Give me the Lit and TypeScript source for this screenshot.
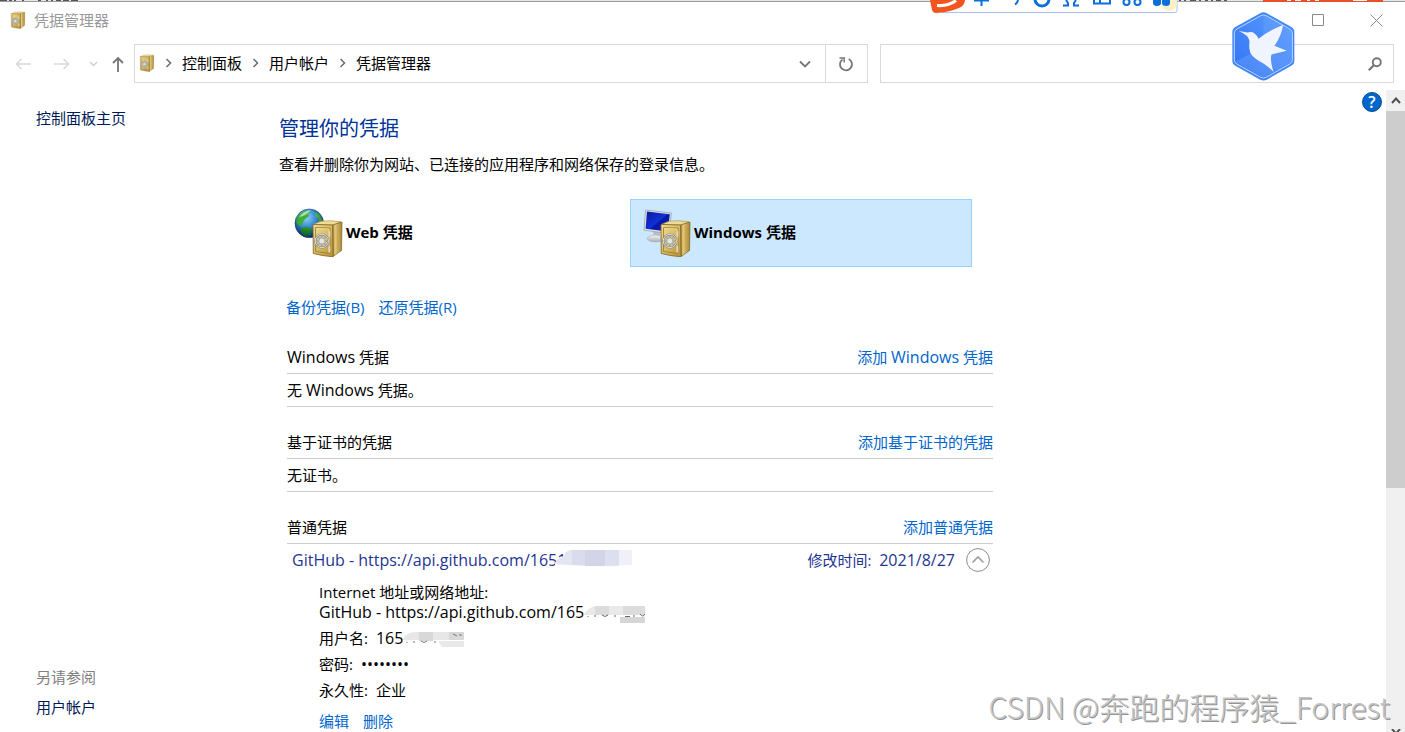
import { LitElement, html, svg, css } from "lit";
import { customElement, state } from "lit/decorators.js";

const safeDefs = svg`
  <defs>
    <linearGradient id="front" x1="0" y1="0" x2="1" y2="1">
      <stop offset="0" stop-color="#f3e09a" />
      <stop offset=".5" stop-color="#d9bb62" />
      <stop offset="1" stop-color="#b58f35" />
    </linearGradient>
    <linearGradient id="side" x1="0" y1="0" x2="1" y2="0">
      <stop offset="0" stop-color="#8f6d22" />
      <stop offset=".25" stop-color="#e5cb7c" />
      <stop offset="1" stop-color="#a98331" />
    </linearGradient>
    <radialGradient id="sea" cx=".4" cy=".3" r=".75">
      <stop offset="0" stop-color="#8fd4f7" />
      <stop offset=".5" stop-color="#2f80d0" />
      <stop offset="1" stop-color="#123a86" />
    </radialGradient>
    <radialGradient id="shade" cx=".45" cy=".35" r=".65">
      <stop offset=".5" stop-color="#04204c" stop-opacity="0" />
      <stop offset="1" stop-color="#04204c" stop-opacity=".65" />
    </radialGradient>
    <linearGradient id="screen" x1="0" y1="0" x2="1" y2="1">
      <stop offset="0" stop-color="#0a1a9c" />
      <stop offset=".5" stop-color="#1030d8" />
      <stop offset=".55" stop-color="#0717a4" />
      <stop offset="1" stop-color="#1224c0" />
    </linearGradient>
    <linearGradient id="stand" x1="0" y1="0" x2="0" y2="1">
      <stop offset="0" stop-color="#f4f4f4" />
      <stop offset="1" stop-color="#a9afb6" />
    </linearGradient>
  </defs>`;

const safeBody = svg`
  <path d="M19 17.5 27 14.2Q37 13 47 14.8L39 18Z" fill="#efdc9c" stroke="#a88637" stroke-width=".6" />
  <path d="M38.5 18 48 15 47.5 43.5 39 49.5Z" fill="url(#side)" stroke="#7d6020" stroke-width=".7" />
  <path d="M19 17.5 38.5 18 39 49.8Q29 49 19.3 46.5Z" fill="url(#front)" stroke="#8b6b26" stroke-width=".9" />
  <path d="M21.5 20.5 36 21V46.5L21.5 44.5Z" fill="none" stroke="#a07e32" stroke-width=".9" />
  <path d="M22.3 21.5 35.2 22V45.6" fill="none" stroke="#f8e9b0" stroke-width=".6" />
  <path d="M44 19v24" stroke="#c7a650" stroke-width="1.4" />
  <circle cx="27.8" cy="34" r="6.6" fill="#cfc28f" stroke="#7c7f80" stroke-width="2" />
  <circle cx="27.8" cy="34" r="6.6" fill="none" stroke="#eef0f0" stroke-width=".9" />
  <path d="M27.8 28v12M21.8 34h12M23.6 29.8l8.4 8.4M32 29.8l-8.4 8.4" stroke="#8c8f90" stroke-width=".7" />
  <circle cx="27.8" cy="34" r="3" fill="#e4e6e6" stroke="#8d9193" stroke-width=".6" />
  <path d="M35.4 25v4M35.4 40v4.5" stroke="#d6d8d8" stroke-width="1.8" stroke-linecap="round" />`;

const smallSafe = html`
  <svg class="small-safe" viewBox="17 12 33 39" aria-hidden="true">${safeDefs}${safeBody}</svg>`;

const webIcon = html`
  <svg class="tile-icon" viewBox="0 0 50 50" aria-hidden="true">
    ${safeDefs}
    <circle cx="15.3" cy="16.3" r="14.3" fill="url(#sea)" stroke="#1b4c8c" stroke-width=".6" />
    <path d="M2.5 11Q6 5 12 3.5L17 4 14 7 15 9 10 13 8 18 5 19 2 16Z" fill="#3fae3a" />
    <path d="M22 5 26 8 29 14 27 20 24 17 25 12 21 9Z" fill="#49b63f" />
    <path d="M6 22 12 19.5 18 22 17 28 12 30Q7 28 6 22Z" fill="#279527" />
    <path d="M5 10Q9 4 17 3 12 9 5 10Z" fill="#d8f2e0" opacity=".7" />
    <circle cx="15.3" cy="16.3" r="14.3" fill="url(#shade)" />
    ${safeBody}
  </svg>`;

const windowsIcon = html`
  <svg class="tile-icon" viewBox="0 0 50 50" aria-hidden="true">
    ${safeDefs}
    <path d="M11 24 18 25V31H12Z" fill="#b9bfc5" />
    <ellipse cx="13.5" cy="31.5" rx="8.2" ry="3.4" fill="url(#stand)" stroke="#9da3a9" stroke-width=".5" />
    <path d="M3.6 3 29.4 6 27 26.5 2 23.2Z" fill="#dfe4ea" stroke="#8f98a3" stroke-width=".7" />
    <path d="M5 4.6 27.8 7.2 25.8 24.6 3.6 21.8Z" fill="url(#screen)" />
    ${safeBody}
  </svg>`;

const chevron = html`
  <svg class="crumb-sep" viewBox="0 0 27 12" aria-hidden="true">
    <path d="M11.5 2 15.5 6 11.5 10" fill="none" stroke="#6b6b6b" stroke-width="1.5" />
  </svg>`;

/* Latin words are set one size larger than the Chinese text around them. */
const mixed = (text: string) =>
  text.split(/([A-Za-z]+)/).map((run, i) => (i % 2 ? html`<span class="latin">${run}</span>` : run));

interface Section {
  title: string;
  action: string;
  empty?: string;
}

const sections: Section[] = [
  { title: "Windows 凭据", action: "添加 Windows 凭据", empty: "无 Windows 凭据。" },
  { title: "基于证书的凭据", action: "添加基于证书的凭据", empty: "无证书。" },
  { title: "普通凭据", action: "添加普通凭据" },
];

@customElement("app-root")
export class AppRoot extends LitElement {
  @state() private expanded = true;

  static styles = css`
    :host {
      display: flex;
      flex-direction: column;
      position: relative;
      height: 100vh;
      overflow: hidden;
      background: #fff;
      color: #000;
      font: 15px/20px "Open Sans", "Noto Sans CJK SC", sans-serif;
    }
    * { box-sizing: border-box; }
    a { color: #0066cc; text-decoration: none; }
    button {
      display: flex;
      align-items: center;
      justify-content: center;
      padding: 0;
      border: 0;
      background: none;
      color: inherit;
      font: inherit;
    }
    svg { display: block; flex: none; }
    h1, h2, p, dl, dd { margin: 0; font: inherit; }
    .latin { font-size: 16px; }

    .strip { flex: none; height: 2px; background: #e6e6e6; border-bottom: 1px solid #9b9b9b; }
    .titlebar { flex: none; display: flex; align-items: center; height: 36px; padding-left: 10px; color: #999; }
    .small-safe { width: 16px; height: 18px; }
    .title { flex: 1; margin-left: 8px; }
    .window-button { width: 58px; height: 36px; }

    .navbar { flex: none; display: flex; height: 39px; margin-top: 6px; padding: 0 11px 0 4px; }
    .history { display: flex; width: 130px; }
    .history button { width: 38px; }
    .history .forward { width: 40px; }
    .history .recent { width: 22px; }
    .history .up { width: 28px; }
    .address { flex: 27; display: flex; align-items: center; border: 1px solid #d9d9d9; padding-left: 4px; }
    .crumbs { flex: 1; display: flex; align-items: center; padding-bottom: 2px; }
    .crumbs a { color: #000; }
    .crumb-sep { width: 27px; height: 12px; }
    .drop { width: 40px; height: 37px; }
    .refresh { width: 42px; height: 37px; border-left: 1px solid #d9d9d9; }
    .search { flex: 19; display: flex; align-items: center; margin-left: 12px; border: 1px solid #d9d9d9; }
    .search input { flex: 1; min-width: 0; height: 30px; border: 0; outline: 0; padding: 0 8px; background: none; font: inherit; }
    .search button { width: 36px; height: 37px; }

    .body { flex: 1; min-height: 0; display: flex; margin-top: 7px; }
    .sidebar { flex: none; display: flex; flex-direction: column; width: 279px; padding: 18px 0 15px 36px; }
    .sidebar a { color: #001a57; }
    .see-also { display: flex; flex-direction: column; gap: 10px; margin-top: auto; color: #808080; }
    main { flex: 1; min-width: 0; padding-top: 25px; overflow: hidden; }
    h1 { color: #003399; font-size: 20px; line-height: 28px; }
    .intro { margin-top: 11px; }
    .tiles { display: grid; grid-template-columns: 1fr 1fr; gap: 6px; max-width: 693px; margin-top: 25px; padding-left: 3px; }
    .tile { justify-content: flex-start; gap: 2px; height: 68px; padding: 0 11px 2px; border: 1px solid transparent; font-weight: 700; }
    .tile.selected { border-color: #99d1ff; background: #cce8ff; }
    .tile-icon { width: 50px; height: 50px; }
    .backup { display: flex; gap: 14px; margin: 30px 0 24px 7px; }

    .sections { display: flex; flex-direction: column; gap: 19px; max-width: 714px; padding-left: 8px; }
    .row { display: flex; align-items: center; justify-content: space-between; height: 33px; border-bottom: 1px solid #ccc; }
    .entry { display: flex; align-items: center; height: 32px; padding: 0 3px 0 5px; color: #1f3494; }
    .entry-name { flex: 1; }
    .masked { position: relative; display: inline-block; }
    .mask { position: absolute; left: 100%; top: 0; }
    .mask.over { margin-left: -11px; }
    .toggle { width: 24px; height: 24px; margin-left: 11px; }
    .details { display: flex; flex-direction: column; gap: 6px; padding: 6px 0 0 32px; }
    .pair { display: flex; gap: 8px; height: 20px; }
    .pair.stacked { flex-direction: column; gap: 0; height: 40px; }
    .pair.stacked > * { height: 20px; }
    .actions { display: flex; gap: 14px; margin-top: 5px; }

    .help { flex: none; width: 20px; height: 20px; margin: 2px 4px 0 0; border: 1px solid #0b4c8c; border-radius: 50%; background: #0066cc; color: #fff; font-size: 16px; font-weight: 600; }
    .scrollbar { flex: none; display: flex; flex-direction: column; width: 19px; background: #f0f0f0; }
    .scroll-up { flex: none; height: 21px; }
    .thumb { flex: 377; background: #cdcdcd; }
    .track { flex: 233; }
    .scroll-down { flex: none; align-items: flex-start; height: 11px; padding-top: 8px; overflow: hidden; }

    .ime { position: absolute; top: 0; left: 928px; }
    .behind-left { position: absolute; top: 0; left: 0; }
    .behind-right { position: absolute; top: 0; right: 0; }
    .bird { position: absolute; top: 12px; right: 110px; }
    .watermark {
      position: absolute;
      right: 15px;
      bottom: 6px;
      color: #c4c4c4;
      font: 300 30px/40px "Noto Sans CJK SC", sans-serif;
      text-shadow: 1px 1px 0 #949494, -1px -1px 0 #fff;
      white-space: nowrap;
    }
  `;

  private toggle() {
    this.expanded = !this.expanded;
  }

  private entryTemplate() {
    return html`
      <div>
        <div class="entry">
          <span class="entry-name"><span class="masked latin">GitHub - https://api.github.com/1651
            <svg class="mask over" width="78" height="20" viewBox="0 0 78 20" aria-hidden="true">
              <path d="M0 20V13Q2 8 9 6 9 1 16 0H64V17Q40 20 0 20Z" fill="#fff" />
              <path d="M0 13Q2 8 9 7 9 1 16 0H64V16Q40 17 0 14Z" fill="#e3e5f2" />
              <path d="M17 0h13v15H17z" fill="#d9dcec" />
              <path d="M30 0h20v16H30z" fill="#d2d5e8" />
              <path d="M50 0h14v15H50z" fill="#dcdfee" />
              <path d="M64 0h13v15H64z" fill="#f0f1f8" />
            </svg></span></span>
          <span>修改时间:&nbsp; <span class="latin">2021/8/27</span></span>
          <button class="toggle" aria-label="折叠" aria-expanded=${this.expanded} @click=${this.toggle}>
            <svg width="24" height="24" viewBox="0 0 24 24">
              <circle cx="12" cy="12" r="11.4" fill="#fff" stroke="#8c8c8c" />
              <path d="M6.5 14.5 12 9l5.500 5.500" fill="none" stroke="#a0a0a0" stroke-width="1.7" />
            </svg>
          </button>
        </div>
        ${this.expanded ? html`
          <dl class="details">
            <div class="pair stacked">
              <dt>Internet 地址或网络地址:</dt>
              <dd><span class="masked latin">GitHub - https://api.github.com/165
                <svg class="mask" width="66" height="24" viewBox="0 0 66 24" aria-hidden="true">
                  <path d="M-1 14Q3 6 11 4H61V13H-1Z" fill="#e9e9e9" />
                  <path d="M11 4h14v9H11zM39 4h22v9H39z" fill="#dcdcdc" />
                  <path d="M36 15h25v6H36z" fill="#d6d6d6" />
                  <path d="M4 14v1M11 13v2M18 13q3 3 6 0M31 13v2M41 14.500h5M50 13v2M56 12q3 4 5 0" fill="none" stroke="#666" />
                </svg></span></dd>
            </div>
            <div class="pair">
              <dt>用户名:</dt>
              <dd><span class="masked latin">165
                <svg class="mask" width="66" height="24" viewBox="0 0 66 24" aria-hidden="true">
                  <path d="M0 11Q4 4 12 4H61V12H0Z" fill="#e7e7e7" />
                  <path d="M16 4h14v9H16zM46 4h15v8H46z" fill="#d8d8d8" />
                  <path d="M35 13h26v6H39Z" fill="#e9e9e9" />
                  <path d="M4 14v1M11 13v2M18 13q3 3 6 0M32 13v2M50 6l4 2M56 7h3" fill="none" stroke="#777" />
                </svg></span></dd>
            </div>
            <div class="pair"><dt>密码:</dt><dd class="latin">••••••••</dd></div>
            <div class="pair"><dt>永久性:</dt><dd>企业</dd></div>
            <div class="actions"><a href="#edit">编辑</a><a href="#delete">删除</a></div>
          </dl>` : null}
      </div>`;
  }

  render() {
    return html`
      <div class="strip"></div>
      <header class="titlebar">
        ${smallSafe}
        <span class="title">凭据管理器</span>
        <button class="window-button" aria-label="最大化">
          <svg width="12" height="12" viewBox="0 0 12 12"><path d="M.5.5h11v11H.5z" fill="none" stroke="#8a8a8a" /></svg>
        </button>
        <button class="window-button" aria-label="关闭">
          <svg width="13" height="13" viewBox="0 0 13 13"><path d="M.5.5l12 12M12.500.5l-12 12" stroke="#8a8a8a" /></svg>
        </button>
      </header>

      <nav class="navbar">
        <div class="history">
          <button aria-label="后退">
            <svg width="16" height="12" viewBox="0 0 16 12"><path d="M16 6H1.500M6.500 1l-5 5 5 5" fill="none" stroke="#d9d9d9" stroke-width="1.5" /></svg>
          </button>
          <button class="forward" aria-label="前进">
            <svg width="16" height="12" viewBox="0 0 16 12"><path d="M0 6h14.500M9.500 1l5 5-5 5" fill="none" stroke="#d9d9d9" stroke-width="1.5" /></svg>
          </button>
          <button class="recent" aria-label="最近的位置">
            <svg width="9" height="6" viewBox="0 0 9 6"><path d="M1 1l3.500 3.500L8 1" fill="none" stroke="#d0d0d0" stroke-width="1.5" /></svg>
          </button>
          <button class="up" aria-label="上移">
            <svg width="12" height="16" viewBox="0 0 12 16"><path d="M6 16V2M1 7l5-5 5 5" fill="none" stroke="#757575" stroke-width="1.8" /></svg>
          </button>
        </div>
        <div class="address">
          <div class="crumbs">
            ${smallSafe}
            ${["控制面板", "用户帐户", "凭据管理器"].map((name) => html`${chevron}<a href="#crumb">${name}</a>`)}
          </div>
          <button class="drop" aria-label="以前的位置">
            <svg width="12" height="8" viewBox="0 0 12 8"><path d="M1 1.500l5 5 5-5" fill="none" stroke="#757575" stroke-width="1.8" /></svg>
          </button>
          <button class="refresh" aria-label="刷新">
            <svg width="16" height="16" viewBox="0 0 16 16">
              <path d="M10.800 3A6 6 0 1 1 4.500 3.400" fill="none" stroke="#777" stroke-width="1.800" />
              <path d="M1.500 2H6.200V6.500" fill="none" stroke="#777" stroke-width="1.500" />
            </svg>
          </button>
        </div>
        <div class="search">
          <input type="search" aria-label="搜索控制面板" />
          <button aria-label="搜索">
            <svg width="14" height="14" viewBox="0 0 14 14">
              <circle cx="8.800" cy="5.200" r="4" fill="none" stroke="#757575" stroke-width="1.900" />
              <path d="M6 8 .8 13.200" stroke="#757575" stroke-width="2.200" />
            </svg>
          </button>
        </div>
      </nav>

      <div class="body">
        <aside class="sidebar">
          <a href="#home">控制面板主页</a>
          <div class="see-also">
            <span>另请参阅</span>
            <a href="#accounts">用户帐户</a>
          </div>
        </aside>
        <main>
          <h1>管理你的凭据</h1>
          <p class="intro">查看并删除你为网站、已连接的应用程序和网络保存的登录信息。</p>
          <div class="tiles">
            <button class="tile">${webIcon}<span>Web 凭据</span></button>
            <button class="tile selected">${windowsIcon}<span>Windows 凭据</span></button>
          </div>
          <div class="backup"><a href="#backup">备份凭据(B)</a><a href="#restore">还原凭据(R)</a></div>
          <div class="sections">
            ${sections.map((s) => html`
              <section>
                <div class="row"><h2>${mixed(s.title)}</h2><a href="#add">${mixed(s.action)}</a></div>
                ${s.empty ? html`<div class="row"><p>${mixed(s.empty)}</p></div>` : this.entryTemplate()}
              </section>`)}
          </div>
        </main>
        <button class="help" aria-label="帮助">?</button>
        <div class="scrollbar">
          <button class="scroll-up" aria-label="向上滚动">
            <svg width="10" height="7" viewBox="0 0 10 7"><path d="M1 6l4-4.500L9 6" fill="none" stroke="#505050" stroke-width="2" /></svg>
          </button>
          <div class="thumb"></div>
          <div class="track"></div>
          <button class="scroll-down" aria-label="向下滚动">
            <svg width="10" height="7" viewBox="0 0 10 7"><path d="M1 0l4 4.500L9 0" fill="none" stroke="#505050" stroke-width="2" /></svg>
          </button>
        </div>
      </div>

      <svg class="behind-left" width="90" height="2" viewBox="0 0 90 2" aria-hidden="true">
        <path d="M0 .5h7M9 .5h3M14 .5h2M22 .5h2M38 .5h3M46 .5h2M51 .5h2M56 .5h5M63 .5h6M71 .5h7" stroke="#555" />
      </svg>
      <svg class="behind-right" width="228" height="2" viewBox="0 0 228 2" aria-hidden="true">
        <path d="M2 .5h2M7 .5h2M13 .5h6M22 .5h2M28 .5h3M34 .5h2M39 .5h5M47 .5h3" stroke="#555" />
        <path d="M86 0h120v2H86z" fill="#e84e2a" />
        <path d="M110 .5h4M118 .5h6M130 .5h3M138 .5h4M176 .5h14" stroke="#fff" />
      </svg>

      <svg class="ime" width="250" height="14" viewBox="0 0 250 14" aria-hidden="true">
        <path d="M14 -2H249V10.500Q249 12.500 247 12.500H14Z" fill="#fff" stroke="#a9c4e4" />
        <circle cx="241" cy="3" r="8" fill="#fdf0c8" />
        <path d="M2 0H37Q37 5 31 8 20 12.500 8 13 5 13 4 10Z" fill="#f4541d" />
        <path d="M9 5.500Q20 6.500 28 .5" fill="none" stroke="#fff" stroke-width="3.200" />
        <g fill="none" stroke="#0a6fdc" stroke-width="2">
          <path d="M46 .5h15M53.500 0v6" />
          <path d="M90 0q-.5 3-3 4.500" />
          <path d="M107 -1a7 7 0 0 0 14 0" stroke-width="3" />
          <path d="M135 5.500h5V3l-2-3M151 5.500h-5V3l2-3" />
          <path d="M166 -2v5.500h16V-2M172 -1v4" />
          <circle cx="198.500" cy="2" r="3" />
          <circle cx="209.500" cy="2" r="3" />
        </g>
        <path d="M225 0h8v4q-1 2-4 2-4 0-4-3zM234 0h8v3q0 3-4 3-3 0-4-2z" fill="#0a6fdc" />
      </svg>

      <svg class="bird" width="63" height="69" viewBox="456 36 190 208" aria-hidden="true">
        <defs>
          <linearGradient id="hex" x1="0" y1="1" x2="1" y2="0">
            <stop offset="0" stop-color="#2f74f4" />
            <stop offset="1" stop-color="#5c9bff" />
          </linearGradient>
        </defs>
        <path d="M541 40Q551 34 561 40L635 81Q644 86 644 97V182Q644 193 635 198L561 240Q551 245 541 240L466 198Q457 193 457 182V97Q457 86 466 81Z" fill="#4387f6" />
        <path d="M543 47Q551 43 559 47L630 87Q638 91 638 100V180Q638 189 630 193L559 233Q551 237 543 233L471 193Q463 189 463 180V100Q463 91 471 87Z" fill="url(#hex)" stroke="#bdd5ff" stroke-width="3" />
        <path d="M551 140V46L636 93V186Z" fill="#78adff" opacity=".3" />
        <path d="M551 140 466 186 551 234 636 186Z" fill="#8fb9ff" opacity=".25" />
        <path d="M476 93 503 98Q515 94 524 101 532 107 536 117 560 95 610 75 606 106 584 138L621 153 575 164Q570 180 581 216 558 193 540 185 517 172 511 158 506 145 509 124 506 105 476 93Z" fill="#f0f4ff" />
      </svg>

      <div class="watermark">CSDN @奔跑的程序猿_Forrest</div>
    `;
  }
}
